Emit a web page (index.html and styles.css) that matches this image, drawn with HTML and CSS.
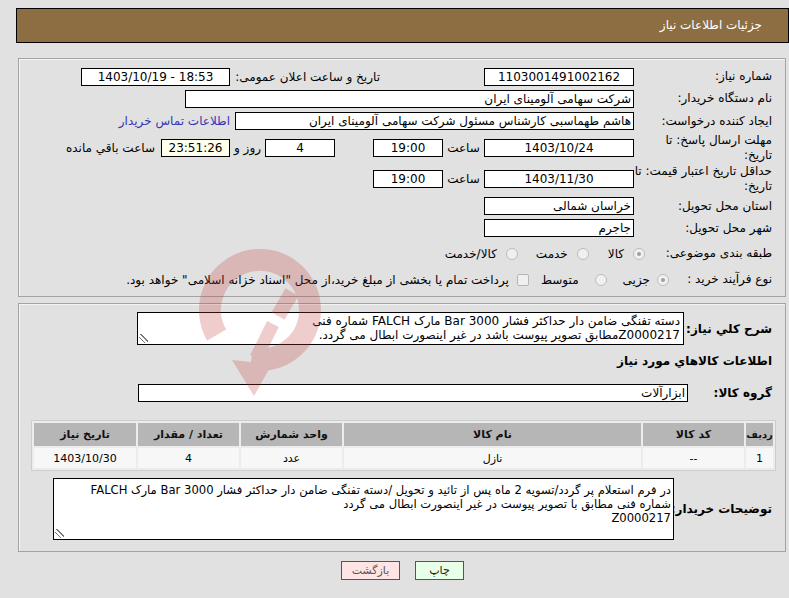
FILE: index.html
```html
<!DOCTYPE html>
<html lang="fa" dir="rtl">
<head>
<meta charset="utf-8">
<title>جزئیات اطلاعات نیاز</title>
<link rel="stylesheet" href="styles.css">
</head>
<body>
<div class="page">
  <div class="header">جزئیات اطلاعات نیاز</div>

  <div class="panel panel-info">
    <div class="row r1">
      <div class="lbl">شماره نیاز:</div>
      <div class="field w150 center">1103001491002162</div>
      <div class="lbl2">تاریخ و ساعت اعلان عمومی:</div>
      <div class="field w149 center ltr">1403/10/19 - 18:53</div>
    </div>
    <div class="row r2">
      <div class="lbl">نام دستگاه خریدار:</div>
      <div class="field w449">شرکت سهامی آلومینای ایران</div>
    </div>
    <div class="row r3">
      <div class="lbl">ایجاد کننده درخواست:</div>
      <div class="field w399">هاشم طهماسبی کارشناس مسئول شرکت سهامی آلومینای ایران</div>
      <a class="link" href="#">اطلاعات تماس خریدار</a>
    </div>
    <div class="row r4">
      <div class="lbl lbl-wrap">مهلت ارسال پاسخ: تا<br>تاریخ:</div>
      <div class="field w150 center">1403/10/24</div>
      <div class="unit unit-hour">ساعت</div>
      <div class="field w70 center">19:00</div>
      <div class="spacer"></div>
      <div class="field w70 center">4</div>
      <div class="unit unit-day">روز و</div>
      <div class="field w69 center remain">23:51:26</div>
      <div class="after">ساعت باقي مانده</div>
    </div>
    <div class="row r5">
      <div class="lbl lbl-wrap">حداقل تاریخ اعتبار قیمت: تا<br>تاریخ:</div>
      <div class="field w150 center">1403/11/30</div>
      <div class="unit unit-hour">ساعت</div>
      <div class="field w70 center">19:00</div>
    </div>
    <div class="row r6">
      <div class="lbl">استان محل تحویل:</div>
      <div class="field w150">خراسان شمالی</div>
    </div>
    <div class="row r7">
      <div class="lbl">شهر محل تحویل:</div>
      <div class="field w150">جاجرم</div>
    </div>
    <div class="row r8">
      <div class="lbl lbl-cat">طبقه بندی موضوعی:</div>
      <span class="radio checked"></span><span class="opt opt-a">کالا</span>
      <span class="radio"></span><span class="opt opt-b">خدمت</span>
      <span class="radio"></span><span class="opt">کالا/خدمت</span>
    </div>
    <div class="row r9">
      <div class="lbl lbl-proc">نوع فرآیند خرید :</div>
      <span class="radio checked"></span><span class="opt opt-c">جزیی</span>
      <span class="radio"></span><span class="opt opt-d">متوسط</span>
      <span class="check"></span><span class="opt opt-e">پرداخت تمام یا بخشی از مبلغ خرید،از محل "اسناد خزانه اسلامی" خواهد بود.</span>
    </div>
  </div>

  <div class="panel panel-goods">
    <div class="row desc-row">
      <div class="blbl blbl-desc">شرح کلي نیاز:</div>
      <div class="textbox tb-desc">دسته تفنگی ضامن دار حداکثر فشار Bar 3000 مارک FALCH شماره فنی<br>Z0000217مطابق تصویر پیوست باشد در غیر اینصورت ابطال می گردد.<span class="grip"></span></div>
    </div>
    <div class="section-title">اطلاعات کالاهاي مورد نیاز</div>
    <div class="row group-row">
      <div class="blbl blbl-group">گروه کالا:</div>
      <div class="field w550">ابزارآلات</div>
    </div>
    <table class="items">
      <thead>
        <tr>
          <th class="c-idx">ردیف</th>
          <th class="c-code">کد کالا</th>
          <th class="c-name">نام کالا</th>
          <th class="c-unit">واحد شمارش</th>
          <th class="c-qty">تعداد / مقدار</th>
          <th class="c-date">تاریخ نیاز</th>
        </tr>
      </thead>
      <tbody>
        <tr>
          <td>1</td>
          <td>--</td>
          <td>نازل</td>
          <td>عدد</td>
          <td>4</td>
          <td>1403/10/30</td>
        </tr>
      </tbody>
    </table>
    <div class="row notes-row">
      <div class="blbl blbl-notes">توضیحات خریدار:</div>
      <div class="textbox tb-notes">در فرم استعلام پر گردد/تسویه 2 ماه پس از تائید و تحویل /دسته تفنگی ضامن دار حداکثر فشار Bar 3000 مارک FALCH<br>شماره فنی مطابق با تصویر پیوست در غیر اینصورت ابطال می گردد<br>Z0000217<span class="grip"></span></div>
    </div>
  </div>

  <div class="buttons">
    <button class="btn btn-print" type="button">چاپ</button>
    <button class="btn btn-back" type="button">بازگشت</button>
  </div>

  <svg class="wm-logo" width="160" height="175" viewBox="0 0 160 175" aria-hidden="true">
    <path d="M36.7 105 A50 50 0 1 1 71.3 129.2" fill="none" stroke="#c43c3c" stroke-width="22"/>
    <line x1="112" y1="62" x2="98" y2="86" stroke="#c43c3c" stroke-width="15"/>
    <line x1="93" y1="94" x2="76" y2="128" stroke="#c43c3c" stroke-width="13"/>
    <polygon points="52,130 92,134 74,166" fill="#c43c3c"/>
  </svg>
</div>
</body>
</html>
```

FILE: styles.css
```css
html, body {
  margin: 0;
  padding: 0;
  background: #e1e1e1;
}
body {
  font-family: "DejaVu Sans", "Noto Sans", sans-serif;
  font-size: 12px;
  color: #000;
  overflow: hidden;
}
.page {
  position: relative;
  padding-top: 8px;
  width: 789px;
}
.header {
  margin-left: 16px;
  height: 33px;
  border: 1px solid #000;
  background: #8d6e42;
  color: #fff;
  font-size: 12px;
  line-height: 33px;
  padding-right: 26px;
}
.panel {
  margin-right: 3px;
  margin-left: 18px;
  border: 1px solid #a3a3a3;
  box-shadow: inset 1px 1px 0 #f4f4f4;
}
.panel-info {
  margin-top: 15px;
  padding: 7px 13px 5px 0;
}
.row {
  display: flex;
  align-items: center;
}
.r1 { height: 21px; }
.r2 { height: 23px; }
.r3 { height: 22px; }
.r4 { height: 31px; }
.r5 { height: 32px; }
.r6 { height: 22px; }
.r7 { height: 22px; }
.r8 { height: 29px; }
.r9 { height: 23px; }

.lbl {
  width: 138px;
  flex: none;
  white-space: nowrap;
  line-height: 15px;
}
.lbl-cat { width: 127px; }
.lbl-proc { width: 103px; }
.field {
  box-sizing: border-box;
  height: 18px;
  border: 1px solid #000;
  background: #fff;
  line-height: 16px;
  padding: 0 2px;
  white-space: nowrap;
  overflow: hidden;
  flex: none;
}
.center { text-align: center; }
.ltr { direction: ltr; }
.w150 { width: 150px; }
.w149 { width: 149px; }
.w449 { width: 449px; }
.w399 { width: 399px; }
.w70 { width: 70px; }
.w69 { width: 69px; }
.w550 { width: 550px; }
.remain { background: #ffffed; }
.lbl2 {
  margin-right: 104px;
  width: 150px;
  flex: none;
  white-space: nowrap;
}
.link {
  color: #3535b5;
  text-decoration: none;
  margin-right: 5px;
  white-space: nowrap;
}
.unit {
  flex: none;
  text-align: center;
  white-space: nowrap;
}
.unit-hour { width: 41px; }
.unit-day { width: 35px; }
.spacer { width: 38px; flex: none; }
.after {
  margin-right: 6px;
  white-space: nowrap;
}
.radio {
  box-sizing: border-box;
  width: 12px;
  height: 12px;
  border-radius: 50%;
  border: 1px solid #bcbcbc;
  background: #f0f0f0;
  flex: none;
  position: relative;
}
.radio.checked::after {
  content: "";
  position: absolute;
  left: 3px;
  top: 3px;
  width: 4px;
  height: 4px;
  border-radius: 50%;
  background: #a0a0a0;
}
.check {
  box-sizing: border-box;
  width: 12px;
  height: 12px;
  border-radius: 2px;
  border: 1px solid #b4b4b4;
  background: #f0f0f0;
  flex: none;
  margin-right: 12px;
}
.opt {
  white-space: nowrap;
  margin-right: 9px;
}
.opt-a { margin-left: 19px; }
.opt-b { margin-left: 18px; }
.opt-c { margin-right: 7px; margin-left: 16px; }
.opt-d { margin-right: 16px; }
.opt-e { margin-right: 8px; }

.panel-goods {
  margin-top: 6px;
  padding: 8px 13px 11px 0;
}
.blbl {
  font-weight: bold;
  font-size: 12px;
  flex: none;
  white-space: nowrap;
}
.blbl-desc { width: 88px; }
.blbl-group { width: 84px; }
.blbl-notes { width: 98px; }
.desc-row { height: 33px; }
.textbox {
  box-sizing: border-box;
  position: relative;
  background: #fff;
  border: 1px solid #000;
  line-height: 14px;
  white-space: nowrap;
  overflow: hidden;
  flex: none;
}
.tb-desc {
  width: 547px;
  height: 33px;
  padding: 1px 3px 0;
}
.tb-notes {
  width: 621px;
  height: 62px;
  padding: 4px 2px 0;
  font-size: 11.6px;
  line-height: 14px;
}
.grip {
  position: absolute;
  left: 1px;
  bottom: 1px;
  width: 9px;
  height: 9px;
  background:
    linear-gradient(45deg, transparent 0 30%, #777 30% 38%, transparent 38% 55%, #777 55% 63%, transparent 63%);
}
.section-title {
  font-weight: bold;
  margin-top: 8px;
  height: 16px;
  line-height: 16px;
}
.group-row {
  margin-top: 15px;
  height: 18px;
}
.items {
  margin-top: 18px;
  margin-right: -4px;
  width: 743px;
  border-collapse: separate;
  border-spacing: 2px;
  border: 1px solid #cdcdcd;
  background: #ececec;
  font-size: 11px;
  table-layout: fixed;
}
.items th {
  background: #b6b6b6;
  height: 23px;
  padding: 0;
  font-weight: bold;
  color: #111;
  white-space: nowrap;
}
.items td {
  background: #f7f7f7;
  height: 20px;
  padding: 0;
  text-align: center;
}
.items th.c-idx { font-size: 10px; }
.c-idx { width: 27px; }
.c-code { width: 101px; }
.c-name { width: 297px; }
.c-unit { width: 101px; }
.c-qty { width: 101px; }
.c-date { width: 102px; }
.notes-row {
  margin-top: 7px;
  height: 62px;
}
.buttons {
  margin-left: 16px;
  margin-top: 9px;
  display: flex;
  justify-content: center;
  gap: 15px;
}
.btn {
  font-family: "DejaVu Sans", sans-serif;
  font-size: 11px;
  height: 19px;
  border: 1px solid #555;
  padding: 0;
  color: #222;
}
.btn-print {
  width: 49px;
  background: #e8ffe8;
}
.btn-back {
  width: 59px;
  background: #ffe4e4;
  color: #555;
}

.wm-logo {
  position: absolute;
  left: 180px;
  top: 230px;
  opacity: 0.25;
  pointer-events: none;
}
```
